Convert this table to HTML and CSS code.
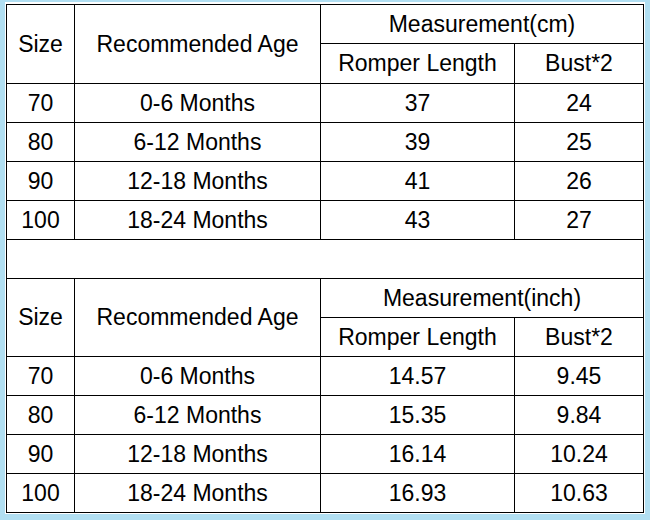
FILE: index.html
```html
<!DOCTYPE html>
<html>
<head>
<meta charset="utf-8">
<link rel="stylesheet" href="styles.css">
</head>
<body>
<div class="frame">
  <div class="chart">
    <div class="cell span-r2">Size</div>
    <div class="cell span-r2">Recommended Age</div>
    <div class="cell span-c2">Measurement(cm)</div>
    <div class="cell">Romper Length</div>
    <div class="cell">Bust*2</div>

    <div class="cell">70</div><div class="cell">0-6 Months</div><div class="cell">37</div><div class="cell">24</div>
    <div class="cell">80</div><div class="cell">6-12 Months</div><div class="cell">39</div><div class="cell">25</div>
    <div class="cell">90</div><div class="cell">12-18 Months</div><div class="cell">41</div><div class="cell">26</div>
    <div class="cell">100</div><div class="cell">18-24 Months</div><div class="cell">43</div><div class="cell">27</div>

    <div class="cell span-all"></div>

    <div class="cell span-r2">Size</div>
    <div class="cell span-r2">Recommended Age</div>
    <div class="cell span-c2">Measurement(inch)</div>
    <div class="cell">Romper Length</div>
    <div class="cell">Bust*2</div>

    <div class="cell">70</div><div class="cell">0-6 Months</div><div class="cell">14.57</div><div class="cell">9.45</div>
    <div class="cell">80</div><div class="cell">6-12 Months</div><div class="cell">15.35</div><div class="cell">9.84</div>
    <div class="cell">90</div><div class="cell">12-18 Months</div><div class="cell">16.14</div><div class="cell">10.24</div>
    <div class="cell">100</div><div class="cell">18-24 Months</div><div class="cell">16.93</div><div class="cell">10.63</div>
  </div>
</div>
</body>
</html>
```

FILE: styles.css
```css
html, body {
  margin: 0;
  padding: 0;
  background: #b1dff2;
  width: 650px;
  height: 520px;
  overflow: hidden;
}
.frame {
  margin: 2px 5px 0 5px;
  width: 640px;
  box-sizing: border-box;
  padding: 2px 1px 1px 1px;
  background: #ffffff;
}
.chart {
  display: grid;
  grid-template-columns: 67px 245px 193px 128px;
  grid-template-rows: 38px 39px repeat(11, 38px);
  gap: 1px;
  padding: 1px;
  width: 638px;
  box-sizing: border-box;
  background: #000;
  font-family: "Liberation Sans", Arial, sans-serif;
  font-size: 23px;
  color: #000;
}
.cell {
  background: #fff;
  display: flex;
  align-items: center;
  justify-content: center;
  white-space: nowrap;
}
.span-r2 { grid-row: span 2; }
.span-c2 { grid-column: span 2; }
.span-all { grid-column: 1 / -1; }
```
